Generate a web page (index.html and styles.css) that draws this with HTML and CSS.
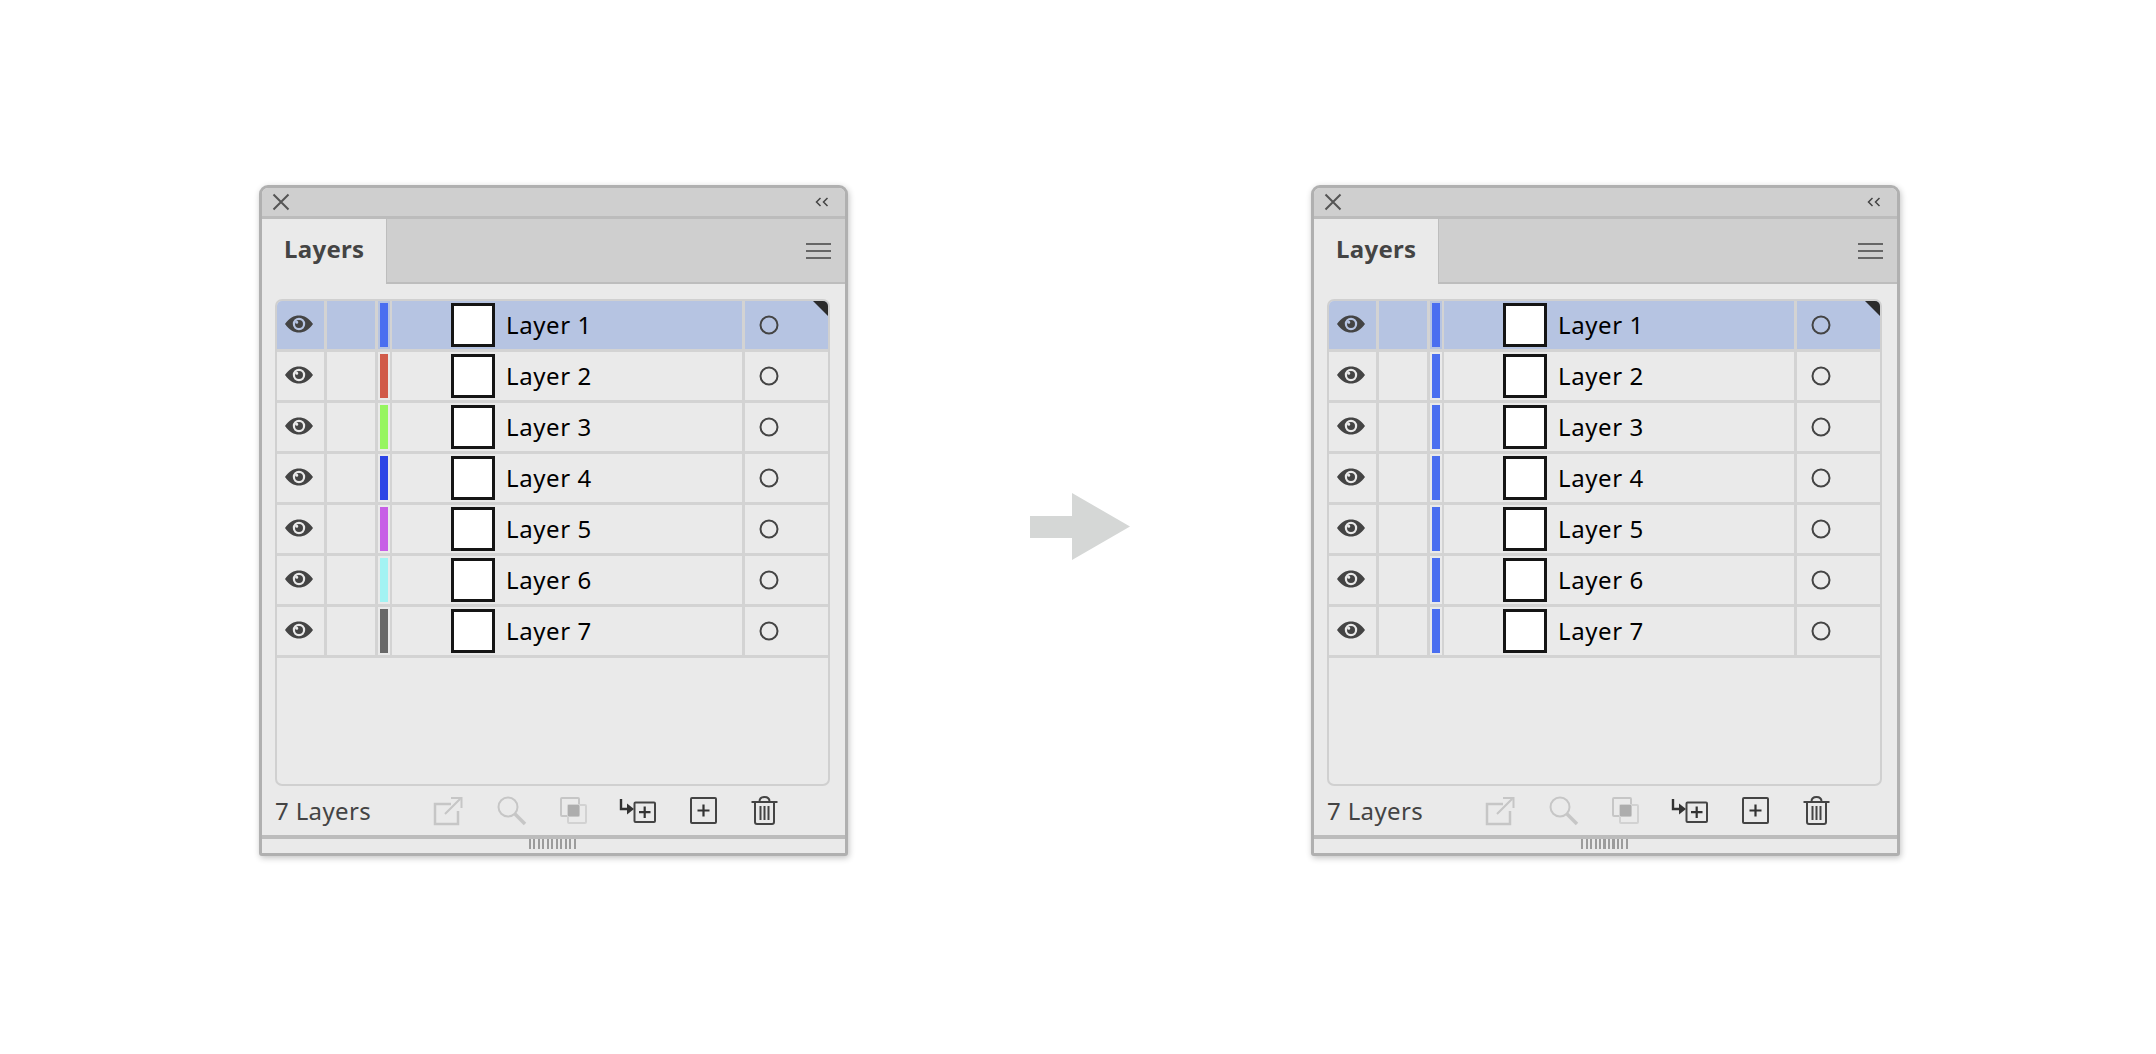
FILE: index.html
```html
<!DOCTYPE html>
<html lang="en">
<head>
<meta charset="utf-8">
<title>Layers</title>
<link rel="stylesheet" href="styles.css">
</head>
<body>
<svg class="defs" width="0" height="0" aria-hidden="true">
  <defs>
    <symbol id="eye" viewBox="0 0 30 20">
      <path fill-rule="evenodd" d="M1 10C5 4 10 1.500 15 1.500S25 4 29 10C25 16 20 18.500 15 18.500S5 16 1 10ZM15 3.800A6.200 6.200 0 1 0 15 16.200A6.200 6.200 0 1 0 15 3.800Z" fill="#444"/>
      <path fill-rule="evenodd" d="M15 6A4 4 0 1 0 15 14A4 4 0 1 0 15 6ZM12.800 6.800A1.500 1.500 0 1 1 12.800 9.800A1.500 1.500 0 1 1 12.800 6.800Z" fill="#444"/>
    </symbol>
    <symbol id="circle" viewBox="0 0 20 20">
      <circle cx="10" cy="10" r="8.500" fill="none" stroke="#444" stroke-width="2"/>
    </symbol>
    <symbol id="export" viewBox="0 0 30 30">
      <path d="M18 8H2V28H25V15" fill="none" stroke="#c6c6c6" stroke-width="2.500"/>
      <path d="M12 18L27 3M18 2H28.500V12" fill="none" stroke="#c6c6c6" stroke-width="2"/>
    </symbol>
    <symbol id="search" viewBox="0 0 30 30">
      <circle cx="11" cy="11" r="9.500" fill="none" stroke="#c6c6c6" stroke-width="2"/>
      <path d="M18 18L28 28" stroke="#c6c6c6" stroke-width="3.500" fill="none"/>
    </symbol>
    <symbol id="mask" viewBox="0 0 27 27">
      <rect x="1" y="1" width="18" height="18" rx="1" fill="none" stroke="#c6c6c6" stroke-width="2"/>
      <rect x="8" y="8" width="18" height="18" rx="1" fill="none" stroke="#d2d2d2" stroke-width="2"/>
      <rect x="8" y="8" width="11" height="11" fill="#adadad"/>
    </symbol>
    <symbol id="sublayer" viewBox="0 0 37 25">
      <path d="M2 1V11H9" fill="none" stroke="#333" stroke-width="2.400"/>
      <path d="M8 5.500L15 11L8 16.500Z" fill="#333"/>
      <rect x="15.500" y="4.500" width="20.500" height="19.500" rx="1" fill="none" stroke="#444" stroke-width="2"/>
      <path d="M25.700 8.500V20M20 14.200H31.500" stroke="#333" stroke-width="2.200" fill="none"/>
    </symbol>
    <symbol id="newlayer" viewBox="0 0 27 27">
      <rect x="1" y="1" width="25" height="25" rx="1" fill="none" stroke="#444" stroke-width="2"/>
      <path d="M13.500 7.500V19.500M7.500 13.500H19.500" stroke="#333" stroke-width="2.200" fill="none"/>
    </symbol>
    <symbol id="trash" viewBox="0 0 27 29">
      <path d="M0.500 6H26.500" stroke="#444" stroke-width="2" fill="none"/>
      <path d="M8.500 5.500C8.500 2.500 10 1 13.500 1S18.500 2.500 18.500 5.500" stroke="#444" stroke-width="2" fill="none"/>
      <path d="M4 6V26C4 27.200 4.800 28 6 28H21C22.200 28 23 27.200 23 26V6" stroke="#444" stroke-width="2" fill="none"/>
      <path d="M9.500 10V24M13.500 10V24M17.500 10V24" stroke="#444" stroke-width="2" fill="none"/>
    </symbol>
  </defs>
</svg>

<section class="panel">
  <header class="titlebar">
    <svg class="close" viewBox="0 0 18 18"><path d="M1.500 1.500L16.500 16.500M16.500 1.500L1.500 16.500" stroke="#555" stroke-width="2" fill="none"/></svg>
    <svg class="collapse" viewBox="0 0 14 10"><path d="M5.500 1L1.500 5L5.500 9M12.500 1L8.500 5L12.500 9" stroke="#444" stroke-width="1.500" fill="none"/></svg>
  </header>
  <div class="tabbar">
    <div class="tab">Layers</div>
    <svg class="menu" viewBox="0 0 25 18"><path d="M0 2H25M0 9H25M0 16H25" stroke="#666" stroke-width="2" fill="none"/></svg>
  </div>
  <div class="body">
    <div class="list">
      <span class="corner"></span>
      <div class="row selected"><div class="cell vis"><svg class="eye"><use href="#eye"/></svg></div><div class="cell lock"></div><div class="cell swatch"><span class="bar blue"></span></div><div class="cell name"><span class="thumb"></span><span class="label">Layer 1</span></div><div class="cell target"><svg class="ring"><use href="#circle"/></svg></div></div>
      <div class="row"><div class="cell vis"><svg class="eye"><use href="#eye"/></svg></div><div class="cell lock"></div><div class="cell swatch"><span class="bar red"></span></div><div class="cell name"><span class="thumb"></span><span class="label">Layer 2</span></div><div class="cell target"><svg class="ring"><use href="#circle"/></svg></div></div>
      <div class="row"><div class="cell vis"><svg class="eye"><use href="#eye"/></svg></div><div class="cell lock"></div><div class="cell swatch"><span class="bar green"></span></div><div class="cell name"><span class="thumb"></span><span class="label">Layer 3</span></div><div class="cell target"><svg class="ring"><use href="#circle"/></svg></div></div>
      <div class="row"><div class="cell vis"><svg class="eye"><use href="#eye"/></svg></div><div class="cell lock"></div><div class="cell swatch"><span class="bar navy"></span></div><div class="cell name"><span class="thumb"></span><span class="label">Layer 4</span></div><div class="cell target"><svg class="ring"><use href="#circle"/></svg></div></div>
      <div class="row"><div class="cell vis"><svg class="eye"><use href="#eye"/></svg></div><div class="cell lock"></div><div class="cell swatch"><span class="bar purple"></span></div><div class="cell name"><span class="thumb"></span><span class="label">Layer 5</span></div><div class="cell target"><svg class="ring"><use href="#circle"/></svg></div></div>
      <div class="row"><div class="cell vis"><svg class="eye"><use href="#eye"/></svg></div><div class="cell lock"></div><div class="cell swatch"><span class="bar cyan"></span></div><div class="cell name"><span class="thumb"></span><span class="label">Layer 6</span></div><div class="cell target"><svg class="ring"><use href="#circle"/></svg></div></div>
      <div class="row"><div class="cell vis"><svg class="eye"><use href="#eye"/></svg></div><div class="cell lock"></div><div class="cell swatch"><span class="bar gray"></span></div><div class="cell name"><span class="thumb"></span><span class="label">Layer 7</span></div><div class="cell target"><svg class="ring"><use href="#circle"/></svg></div></div>
    </div>
    <footer class="footer">
      <span class="count">7 Layers</span>
      <svg class="ic ic-export"><use href="#export"/></svg>
      <svg class="ic ic-search"><use href="#search"/></svg>
      <svg class="ic ic-mask"><use href="#mask"/></svg>
      <svg class="ic ic-sub"><use href="#sublayer"/></svg>
      <svg class="ic ic-new"><use href="#newlayer"/></svg>
      <svg class="ic ic-trash"><use href="#trash"/></svg>
    </footer>
  </div>
  <div class="resize"><span class="grip"></span></div>
</section>

<svg class="arrow" viewBox="0 0 100 67"><path d="M0 23H42V0L100 33.500L42 67V45H0Z" fill="#d5d7d6"/></svg>

<section class="panel">
  <header class="titlebar">
    <svg class="close" viewBox="0 0 18 18"><path d="M1.500 1.500L16.500 16.500M16.500 1.500L1.500 16.500" stroke="#555" stroke-width="2" fill="none"/></svg>
    <svg class="collapse" viewBox="0 0 14 10"><path d="M5.500 1L1.500 5L5.500 9M12.500 1L8.500 5L12.500 9" stroke="#444" stroke-width="1.500" fill="none"/></svg>
  </header>
  <div class="tabbar">
    <div class="tab">Layers</div>
    <svg class="menu" viewBox="0 0 25 18"><path d="M0 2H25M0 9H25M0 16H25" stroke="#666" stroke-width="2" fill="none"/></svg>
  </div>
  <div class="body">
    <div class="list">
      <span class="corner"></span>
      <div class="row selected"><div class="cell vis"><svg class="eye"><use href="#eye"/></svg></div><div class="cell lock"></div><div class="cell swatch"><span class="bar blue"></span></div><div class="cell name"><span class="thumb"></span><span class="label">Layer 1</span></div><div class="cell target"><svg class="ring"><use href="#circle"/></svg></div></div>
      <div class="row"><div class="cell vis"><svg class="eye"><use href="#eye"/></svg></div><div class="cell lock"></div><div class="cell swatch"><span class="bar blue"></span></div><div class="cell name"><span class="thumb"></span><span class="label">Layer 2</span></div><div class="cell target"><svg class="ring"><use href="#circle"/></svg></div></div>
      <div class="row"><div class="cell vis"><svg class="eye"><use href="#eye"/></svg></div><div class="cell lock"></div><div class="cell swatch"><span class="bar blue"></span></div><div class="cell name"><span class="thumb"></span><span class="label">Layer 3</span></div><div class="cell target"><svg class="ring"><use href="#circle"/></svg></div></div>
      <div class="row"><div class="cell vis"><svg class="eye"><use href="#eye"/></svg></div><div class="cell lock"></div><div class="cell swatch"><span class="bar blue"></span></div><div class="cell name"><span class="thumb"></span><span class="label">Layer 4</span></div><div class="cell target"><svg class="ring"><use href="#circle"/></svg></div></div>
      <div class="row"><div class="cell vis"><svg class="eye"><use href="#eye"/></svg></div><div class="cell lock"></div><div class="cell swatch"><span class="bar blue"></span></div><div class="cell name"><span class="thumb"></span><span class="label">Layer 5</span></div><div class="cell target"><svg class="ring"><use href="#circle"/></svg></div></div>
      <div class="row"><div class="cell vis"><svg class="eye"><use href="#eye"/></svg></div><div class="cell lock"></div><div class="cell swatch"><span class="bar blue"></span></div><div class="cell name"><span class="thumb"></span><span class="label">Layer 6</span></div><div class="cell target"><svg class="ring"><use href="#circle"/></svg></div></div>
      <div class="row"><div class="cell vis"><svg class="eye"><use href="#eye"/></svg></div><div class="cell lock"></div><div class="cell swatch"><span class="bar blue"></span></div><div class="cell name"><span class="thumb"></span><span class="label">Layer 7</span></div><div class="cell target"><svg class="ring"><use href="#circle"/></svg></div></div>
    </div>
    <footer class="footer">
      <span class="count">7 Layers</span>
      <svg class="ic ic-export"><use href="#export"/></svg>
      <svg class="ic ic-search"><use href="#search"/></svg>
      <svg class="ic ic-mask"><use href="#mask"/></svg>
      <svg class="ic ic-sub"><use href="#sublayer"/></svg>
      <svg class="ic ic-new"><use href="#newlayer"/></svg>
      <svg class="ic ic-trash"><use href="#trash"/></svg>
    </footer>
  </div>
  <div class="resize"><span class="grip"></span></div>
</section>
</body>
</html>
```

FILE: styles.css
```css
* { box-sizing: border-box; }
html, body { margin: 0; height: 100%; }
body {
  background: #fff;
  display: flex;
  align-items: flex-start;
  padding: 185px 0 0 259px;
  font-family: "Noto Sans", "Open Sans", sans-serif;
  overflow: hidden;
}
.defs { position: absolute; }
.panel {
  width: 589px;
  height: 671px;
  flex: none;
  display: flex;
  flex-direction: column;
  background: #eaeaea;
  border: 3px solid #b0b0b0;
  border-radius: 9px 9px 3px 3px;
  box-shadow: 1px 2px 6px rgba(0, 0, 0, 0.24);
}
.titlebar {
  height: 31px;
  flex: none;
  display: flex;
  align-items: center;
  justify-content: space-between;
  padding: 0 16px 0 10px;
  background: #cfcfcf;
  border-bottom: 3px solid #bcbcbc;
  border-radius: 6px 6px 0 0;
}
.close { width: 18px; height: 18px; }
.collapse { width: 14px; height: 10px; }
.tabbar {
  height: 65px;
  flex: none;
  display: flex;
  align-items: stretch;
  justify-content: space-between;
  background: #cfcfcf;
  border-bottom: 2px solid #bdbdbd;
}
.tab {
  width: 125px;
  margin-bottom: -2px;
  padding: 14px 0 0 22px;
  background: #eaeaea;
  border-right: 1px solid #bdbdbd;
  font-size: 24px;
  line-height: 32px;
  font-weight: 700;
  color: #444;
  letter-spacing: 0.3px;
}
.menu { width: 25px; height: 18px; align-self: center; margin-right: 14px; }
.body {
  flex: 1;
  display: flex;
  flex-direction: column;
  padding: 15px 15px 0 13px;
  min-height: 0;
}
.list {
  position: relative;
  height: 487px;
  flex: none;
  border: 2px solid #d0d0d0;
  border-radius: 7px;
  overflow: hidden;
}
.corner {
  position: absolute;
  top: 0;
  right: 0;
  width: 15px;
  height: 15px;
  background: #2b2b2b;
  clip-path: polygon(0 0, 100% 0, 100% 100%);
}
.row {
  height: 51px;
  display: grid;
  grid-template-columns: 50px 51px 14px 353px 1fr;
  border-bottom: 3px solid #d3d3d3;
}
.row.selected { background: #b6c4e2; }
.cell {
  display: flex;
  align-items: center;
  border-right: 3px solid #d3d3d3;
  min-width: 0;
}
.cell.target { border-right: 0; }
.vis { justify-content: center; padding-bottom: 3px; padding-right: 3px; }
.eye { width: 30px; height: 20px; }
.swatch { justify-content: flex-start; padding-left: 2px; border-right-width: 2px; }
.bar { display: block; width: 8px; height: 44px; }
.blue { background: #4a6ef0; }
.red { background: #d15a49; }
.green { background: #96f55f; }
.navy { background: #2d45e6; }
.purple { background: #c75fe6; }
.cyan { background: #a3f3f3; }
.gray { background: #686868; }
.name { padding-left: 59px; gap: 11px; }
.thumb {
  width: 44px;
  height: 44px;
  flex: none;
  background: #fff;
  border: 3px solid #151515;
}
.label {
  font-size: 24px;
  line-height: 30px;
  color: #000;
  letter-spacing: 0.6px;
}
.target { padding-left: 14px; }
.ring { width: 20px; height: 20px; }
.footer {
  flex: 1;
  display: flex;
  align-items: center;
}
.count {
  width: 158px;
  font-size: 24px;
  line-height: 32px;
  color: #444;
  letter-spacing: 0.35px;
}
.ic { display: block; flex: none; }
.ic-export { width: 30px; height: 30px; }
.ic-search { width: 30px; height: 30px; margin-left: 34px; }
.ic-mask { width: 27px; height: 27px; margin-left: 33px; }
.ic-sub { width: 37px; height: 25px; margin-left: 32px; }
.ic-new { width: 27px; height: 27px; margin-left: 34px; }
.ic-trash { width: 27px; height: 29px; margin-left: 34px; }
.resize {
  height: 18px;
  flex: none;
  border-top: 4px solid #bcbcbc;
  display: flex;
  justify-content: center;
}
.grip {
  width: 47px;
  height: 10px;
  margin-right: 3px;
  background: repeating-linear-gradient(90deg, #9c9c9c 0 2px, transparent 2px 4.500px);
}
.arrow { width: 100px; height: 67px; flex: none; margin: 308px 181px 0 182px; }
```
